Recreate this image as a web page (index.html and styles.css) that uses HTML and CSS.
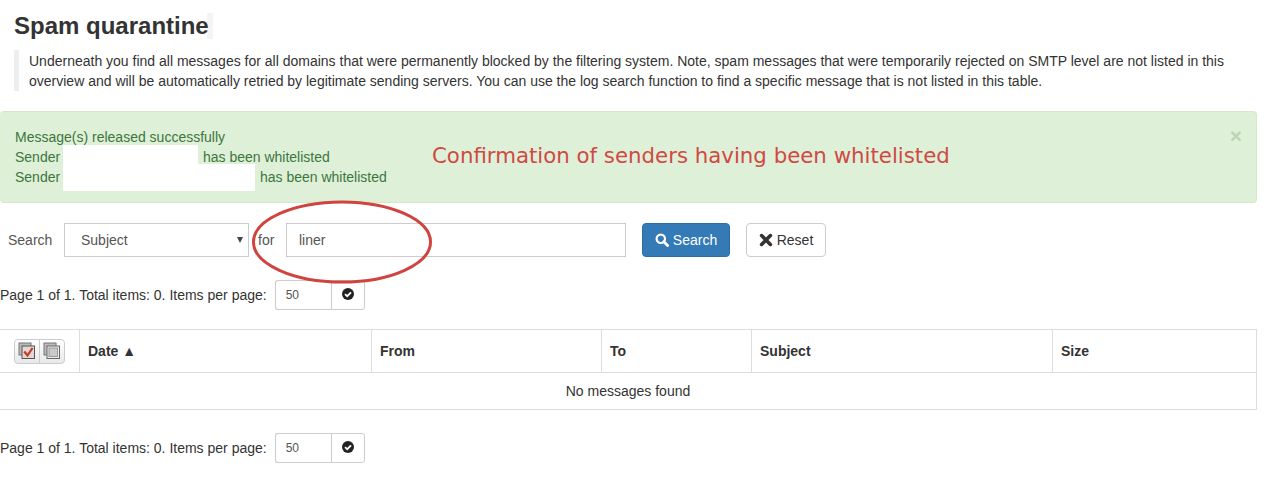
FILE: index.html
```html
<!DOCTYPE html>
<html lang="en">
<head>
  <meta charset="UTF-8">
  <meta name="viewport" content="width=device-width, initial-scale=1.0">
  <title>Spam quarantine</title>
  <link rel="stylesheet" href="styles.css">
</head>
<body>
<div class="page">
  <h1 class="titulo"><span class="titulo-texto">Spam quarantine</span></h1>
  <p class="nota">Underneath you find all messages for all domains that were permanently blocked by the filtering system. Note, spam messages that were temporarily rejected on SMTP level are not listed in this overview and will be automatically retried by legitimate sending servers. You can use the log search function to find a specific message that is not listed in this table.</p>

  <div class="alerta">
    <div class="alerta-texto">
      <div>Message(s) released successfully</div>
      <div>Sender <span class="tapa tapa-a"></span> has been whitelisted</div>
      <div>Sender <span class="tapa tapa-b"></span> has been whitelisted</div>
    </div>
    <span class="fechar">&times;</span>
    <span class="anotacao">Confirmation of senders having been whitelisted</span>
  </div>

  <form class="busca">
    <label class="busca-label">Search</label>
    <div class="select-box">Subject</div>
    <label class="busca-for">for</label>
    <input class="busca-input" type="text" value="liner">
    <button class="btn btn-azul" type="button">
      <svg class="ico" viewBox="0 0 14 14"><circle cx="5.8" cy="5.8" r="4.2" fill="none" stroke="#fff" stroke-width="2.2"/><path d="M8.8 8.8L12.6 12.6" stroke="#fff" stroke-width="2.8" stroke-linecap="round"/></svg>
      Search
    </button>
    <button class="btn" type="button">
      <svg class="ico" viewBox="0 0 14 14"><path d="M2.6 2.6L11.4 11.4M11.4 2.6L2.6 11.4" stroke="#333" stroke-width="3.6" stroke-linecap="round"/></svg>
      Reset
    </button>
    <svg class="elipse" viewBox="0 0 190 90"><ellipse cx="95" cy="45" rx="88.5" ry="40" fill="none" stroke="#d04440" stroke-width="3"/></svg>
  </form>

  <div class="paginacao pag-topo">
    <span>Page 1 of 1. Total items: 0. Items per page:</span>
    <div class="pag-grupo">
      <input class="pag-input" type="text" value="50">
      <button class="pag-btn" type="button">
        <svg class="ico-ok" viewBox="0 0 12 12"><circle cx="6" cy="6" r="6" fill="#222"/><path d="M3 6.2L5.2 8.2L9 4.4" fill="none" stroke="#fff" stroke-width="1.8"/></svg>
      </button>
    </div>
  </div>

  <table class="tabela">
    <thead>
      <tr>
        <th class="col-sel">
          <div class="sel-grupo">
            <span class="sel-btn">
              <svg viewBox="0 0 18 18"><rect x="1" y="1" width="12" height="12" fill="#bbb" stroke="#777"/><rect x="4" y="4" width="12.5" height="12.5" fill="#e6d6d2" stroke="#555"/><path d="M6.3 9.5L9.5 13.5L14.5 6" fill="none" stroke="#c0392b" stroke-width="2.2"/></svg>
            </span>
            <span class="sel-btn">
              <svg viewBox="0 0 18 18"><rect x="1" y="1" width="12" height="12" fill="#bbb" stroke="#777"/><rect x="4" y="4" width="12.5" height="12.5" fill="#eee" stroke="#666"/><rect x="6" y="6" width="8.5" height="8.5" fill="#c9c9c9" stroke="#999"/></svg>
            </span>
          </div>
        </th>
        <th class="col-date">Date &#9650;</th>
        <th class="col-from">From</th>
        <th class="col-to">To</th>
        <th class="col-subject">Subject</th>
        <th>Size</th>
      </tr>
    </thead>
    <tbody>
      <tr><td colspan="6">No messages found</td></tr>
    </tbody>
  </table>

  <div class="paginacao pag-baixo">
    <span>Page 1 of 1. Total items: 0. Items per page:</span>
    <div class="pag-grupo">
      <input class="pag-input" type="text" value="50">
      <button class="pag-btn" type="button">
        <svg class="ico-ok" viewBox="0 0 12 12"><circle cx="6" cy="6" r="6" fill="#222"/><path d="M3 6.2L5.2 8.2L9 4.4" fill="none" stroke="#fff" stroke-width="1.8"/></svg>
      </button>
    </div>
  </div>
</div>
</body>
</html>
```

FILE: styles.css
```css
* {
  box-sizing: border-box;
}
body {
  margin: 0;
  background: #fff;
  color: #333;
  font-family: "Liberation Sans", Arial, sans-serif;
  font-size: 14px;
  line-height: 20px;
}
.page {
  width: 1257px;
}

.titulo {
  margin: 0;
  padding: 13px 0 0 14px;
  font-size: 24px;
  line-height: 26px;
  font-weight: bold;
}
.titulo-texto {
  display: inline-block;
  padding-right: 4px;
  background: linear-gradient(90deg, #fff 97%, #f4f4f4 97%);
}
.nota {
  margin: 11px 0 0 14px;
  padding: 1px 0 0 10px;
  border-left: 5px solid #eee;
  height: 41px;
}

.alerta {
  position: relative;
  display: flex;
  justify-content: space-between;
  margin-top: 20px;
  padding: 15px 15px 15px 15px;
  height: 92px;
  background: #dff0d8;
  border: 1px solid #d6e9c6;
  border-left: 0;
  border-radius: 4px;
  color: #3c763d;
}
.tapa {
  position: relative;
  display: inline-block;
  height: 1px;
}
.tapa::after {
  content: "";
  position: absolute;
  left: -1px;
  right: 1px;
  background: #fff;
}
.tapa-a {
  width: 135px;
}
.tapa-a::after {
  top: -16px;
  height: 19px;
}
.tapa-b {
  width: 192px;
}
.tapa-b::after {
  top: -17px;
  height: 27px;
}
.fechar {
  font-size: 21px;
  font-weight: bold;
  line-height: 20px;
  margin: -1px -1px 0 0;
  color: #3c763d;
  opacity: 0.22;
}
.anotacao {
  position: absolute;
  left: 432px;
  top: 29px;
  font-family: "DejaVu Sans", sans-serif;
  font-size: 21.3px;
  line-height: 30px;
  color: #cf4a43;
  white-space: nowrap;
}

.busca {
  position: relative;
  display: flex;
  align-items: center;
  margin-top: 20px;
  height: 34px;
  padding-left: 8px;
}
.busca-label {
  width: 56px;
  color: #555;
}
.select-box {
  position: relative;
  width: 185px;
  height: 34px;
  padding: 6px 16px;
  border: 1px solid #ccc;
  color: #555;
}
.select-box::after {
  content: "";
  position: absolute;
  right: 5px;
  top: 13px;
  border-left: 3.5px solid transparent;
  border-right: 3.5px solid transparent;
  border-top: 6px solid #444;
}
.busca-for {
  width: 37px;
  padding-left: 9px;
  color: #555;
}
.busca-input {
  width: 340px;
  height: 34px;
  padding: 6px 12px;
  border: 1px solid #ccc;
  border-radius: 0;
  color: #555;
  font: inherit;
  outline: 0;
}
.btn {
  display: flex;
  align-items: center;
  justify-content: center;
  gap: 4px;
  width: 80px;
  height: 34px;
  margin-left: 16px;
  padding: 0;
  background: #fff;
  border: 1px solid #ccc;
  border-radius: 4px;
  color: #333;
  font: inherit;
}
.btn-azul {
  width: 88px;
  background: #337ab7;
  border-color: #2e6da4;
  color: #fff;
}
.ico {
  width: 14px;
  height: 14px;
}
.elipse {
  position: absolute;
  left: 247px;
  top: -26px;
  width: 190px;
  height: 90px;
}

.paginacao {
  display: flex;
  align-items: center;
  gap: 8px;
  height: 30px;
}
.pag-topo {
  margin-top: 23px;
}
.pag-baixo {
  margin-top: 23px;
}
.pag-grupo {
  display: flex;
  height: 30px;
}
.pag-input {
  width: 56px;
  height: 30px;
  padding: 5px 10px;
  border: 1px solid #ccc;
  border-right: 0;
  border-radius: 3px 0 0 3px;
  color: #555;
  font: inherit;
  font-size: 12px;
  outline: 0;
}
.pag-btn {
  display: flex;
  align-items: center;
  justify-content: center;
  width: 34px;
  height: 30px;
  padding: 0 0 2px;
  background: #fff;
  border: 1px solid #ccc;
  border-radius: 0 3px 3px 0;
}
.ico-ok {
  width: 12px;
  height: 12px;
}

.tabela {
  width: 1257px;
  margin-top: 19px;
  border-collapse: collapse;
  table-layout: fixed;
  border: 1px solid #ddd;
  border-left: 0;
}
.tabela th {
  height: 43px;
  padding: 8px 8px 8px 8.5px;
  border: 1px solid #ddd;
  text-align: left;
  font-weight: bold;
}
.tabela th:first-child {
  border-left: 0;
}
.tabela td {
  height: 37px;
  padding: 8px;
  text-align: center;
}
.col-sel {
  width: 79px;
}
.tabela th.col-sel {
  padding: 0 0 0 14px;
}
.col-date {
  width: 292px;
}
.col-from {
  width: 230px;
}
.col-to {
  width: 150px;
}
.col-subject {
  width: 301px;
}
.sel-grupo {
  display: flex;
  width: 51px;
  height: 25px;
  background: linear-gradient(#fff, #e8e8e8);
  border: 1px solid #ccc;
  border-radius: 4px;
}
.sel-btn {
  display: flex;
  align-items: center;
  justify-content: center;
  flex: 1;
}
.sel-btn + .sel-btn {
  border-left: 1px solid #ccc;
}
.sel-btn svg {
  width: 18px;
  height: 18px;
}
```
